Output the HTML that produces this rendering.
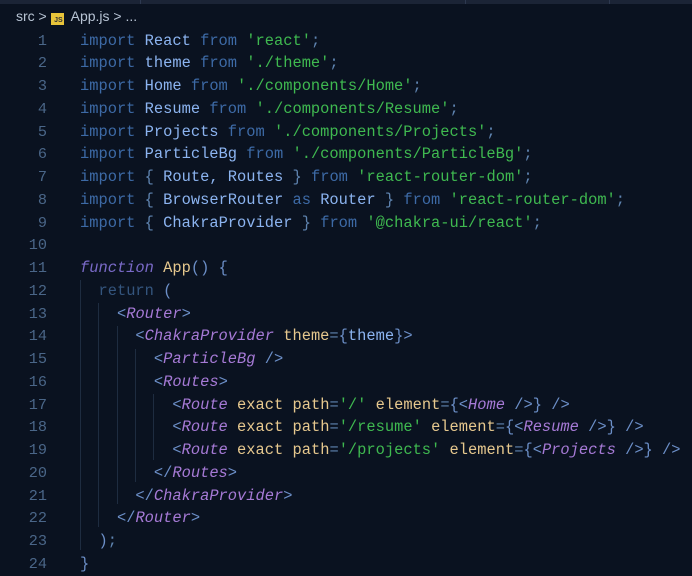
<!DOCTYPE html><html><head><style>
html,body{margin:0;padding:0;background:#0a1220;width:692px;height:571px;overflow:hidden}
.top{position:absolute;left:0;top:0;width:692px;height:4px;background:#1b2436}
.top i{position:absolute;top:0;height:4px;width:1px;background:#2d3950}
.bc{position:absolute;left:16px;top:8px;font:14px "Liberation Sans",sans-serif;color:#b8c4d4;white-space:pre}
.js{display:inline-block;width:13px;height:12px;background:#e8c43a;color:#333;font:bold 7px "Liberation Sans",sans-serif;text-align:right;line-height:16px;vertical-align:-1px;padding-right:1px;box-sizing:border-box}
.ln{position:absolute;left:0;top:29.5px;width:47px;text-align:right;font:15.2px/22.75px "Liberation Mono",monospace;color:#4a6688;white-space:pre}
.code{position:absolute;left:80px;top:29.5px;font:15.4px/22.75px "Liberation Mono",monospace;color:#8cb4f0;white-space:pre;margin:0}
.k{color:#3d6aa6}.s{color:#3fb950}.p{color:#5f84b0}.f{color:#7a6ac8;font-style:italic}.y{color:#e6c88e}.t{color:#a67ad6;font-style:italic}.b{color:#6c8fc8}.r{color:#34557e}
.g{position:absolute;width:1px;background:#1e2c40}
</style></head><body>
<div class="top"><i style="left:140px"></i><i style="left:465px"></i><i style="left:609px"></i></div>
<div class="bc">src &gt; <span class="js">JS</span>  App.js &gt; ...</div>
<div class="ln">1
2
3
4
5
6
7
8
9
10
11
12
13
14
15
16
17
18
19
20
21
22
23
24</div>
<div class="g" style="left:80px;top:280px;height:270px"></div>
<div class="g" style="left:98px;top:303px;height:224px"></div>
<div class="g" style="left:117px;top:326px;height:178px"></div>
<div class="g" style="left:135px;top:349px;height:133px"></div>
<div class="g" style="left:153px;top:394px;height:66px"></div>
<pre class="code"><span class="k">import</span> React <span class="k">from</span> <span class="s">'react'</span><span class="p">;</span>
<span class="k">import</span> theme <span class="k">from</span> <span class="s">'./theme'</span><span class="p">;</span>
<span class="k">import</span> Home <span class="k">from</span> <span class="s">'./components/Home'</span><span class="p">;</span>
<span class="k">import</span> Resume <span class="k">from</span> <span class="s">'./components/Resume'</span><span class="p">;</span>
<span class="k">import</span> Projects <span class="k">from</span> <span class="s">'./components/Projects'</span><span class="p">;</span>
<span class="k">import</span> ParticleBg <span class="k">from</span> <span class="s">'./components/ParticleBg'</span><span class="p">;</span>
<span class="k">import</span> <span class="p">{</span> Route, Routes <span class="p">}</span> <span class="k">from</span> <span class="s">'react-router-dom'</span><span class="p">;</span>
<span class="k">import</span> <span class="p">{</span> BrowserRouter <span class="k">as</span> Router <span class="p">}</span> <span class="k">from</span> <span class="s">'react-router-dom'</span><span class="p">;</span>
<span class="k">import</span> <span class="p">{</span> ChakraProvider <span class="p">}</span> <span class="k">from</span> <span class="s">'@chakra-ui/react'</span><span class="p">;</span>

<span class="f">function</span> <span class="y">App</span><span class="b">()</span> <span class="b">{</span>
  <span class="r">return</span> <span class="b">(</span>
    <span class="b">&lt;</span><span class="t">Router</span><span class="b">&gt;</span>
      <span class="b">&lt;</span><span class="t">ChakraProvider</span> <span class="y">theme</span><span class="p">=</span><span class="b">{</span>theme<span class="b">}&gt;</span>
        <span class="b">&lt;</span><span class="t">ParticleBg</span> <span class="b">/&gt;</span>
        <span class="b">&lt;</span><span class="t">Routes</span><span class="b">&gt;</span>
          <span class="b">&lt;</span><span class="t">Route</span> <span class="y">exact</span> <span class="y">path</span><span class="p">=</span><span class="s">'/'</span> <span class="y">element</span><span class="p">=</span><span class="b">{&lt;</span><span class="t">Home</span> <span class="b">/&gt;}</span> <span class="b">/&gt;</span>
          <span class="b">&lt;</span><span class="t">Route</span> <span class="y">exact</span> <span class="y">path</span><span class="p">=</span><span class="s">'/resume'</span> <span class="y">element</span><span class="p">=</span><span class="b">{&lt;</span><span class="t">Resume</span> <span class="b">/&gt;}</span> <span class="b">/&gt;</span>
          <span class="b">&lt;</span><span class="t">Route</span> <span class="y">exact</span> <span class="y">path</span><span class="p">=</span><span class="s">'/projects'</span> <span class="y">element</span><span class="p">=</span><span class="b">{&lt;</span><span class="t">Projects</span> <span class="b">/&gt;}</span> <span class="b">/&gt;</span>
        <span class="b">&lt;/</span><span class="t">Routes</span><span class="b">&gt;</span>
      <span class="b">&lt;/</span><span class="t">ChakraProvider</span><span class="b">&gt;</span>
    <span class="b">&lt;/</span><span class="t">Router</span><span class="b">&gt;</span>
  <span class="b">)</span><span class="p">;</span>
<span class="b">}</span></pre>
</body></html>
